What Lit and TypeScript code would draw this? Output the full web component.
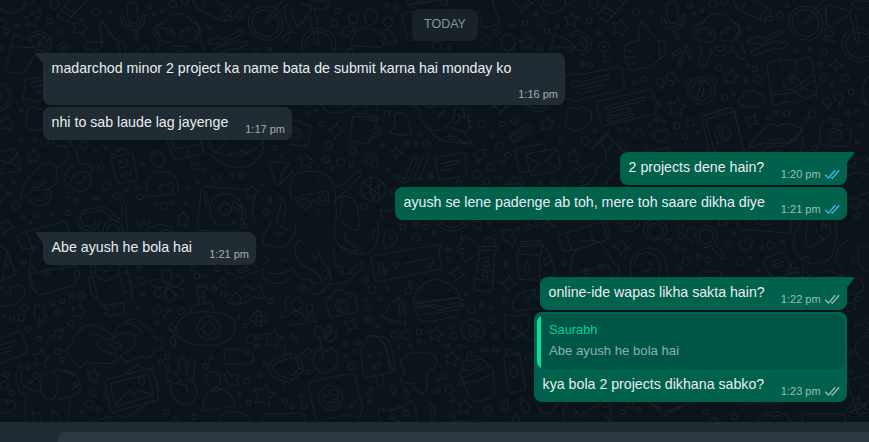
import { LitElement, html, svg, css, nothing } from "lit";
import { customElement, property } from "lit/decorators.js";
import { classMap } from "lit/directives/class-map.js";
import { styleMap } from "lit/directives/style-map.js";

interface Message {
  text: string;
  time: string;
  width: number;
  out?: boolean;
  first?: boolean;
  tall?: boolean;
  read?: boolean;
  quote?: { author: string; text: string };
}

const MESSAGES: Message[] = [
  { text: "madarchod minor 2 project ka name bata de submit karna hai monday ko", time: "1:16 pm", width: 522, first: true, tall: true },
  { text: "nhi to sab laude lag jayenge", time: "1:17 pm", width: 249 },
  { text: "2 projects dene hain?", time: "1:20 pm", width: 227, out: true, first: true, read: true },
  { text: "ayush se lene padenge ab toh, mere toh saare dikha diye", time: "1:21 pm", width: 452, out: true, read: true },
  { text: "Abe ayush he bola hai", time: "1:21 pm", width: 213, first: true },
  { text: "online-ide wapas likha sakta hain?", time: "1:22 pm", width: 307, out: true, first: true },
  { text: "kya bola 2 projects dikhana sabko?", time: "1:23 pm", width: 313, out: true, quote: { author: "Saurabh", text: "Abe ayush he bola hai" } },
];

/* Wallpaper doodles are laid out on sheets, in thirds of a pixel. */
interface Sheet {
  x: number;
  y: number;
  dots: number[][];
  stars?: number[][];
  sparks?: number[][];
  paths: string[];
}

const starPath = ([cx, cy, r, rot = 0]: number[]) => {
  const pts: string[] = [];
  for (let i = 0; i < 10; i++) {
    const a = ((i * 36 - 90 + rot) * Math.PI) / 180;
    const k = i % 2 ? r * 0.5 : r;
    pts.push(`${(cx + k * Math.cos(a)).toFixed(1)} ${(cy + k * Math.sin(a)).toFixed(1)}`);
  }
  return `M${pts.join("L")}Z`;
};

const sparkPath = ([x, y, r, rot = 0]: number[]) => {
  const a = (rot * Math.PI) / 180;
  const p = (i: number, k: number) =>
    `${(x + k * Math.cos(a + (i * Math.PI) / 4)).toFixed(1)} ${(y + k * Math.sin(a + (i * Math.PI) / 4)).toFixed(1)}`;
  return `M${p(0, r)}Q${p(1, r * 0.22)} ${p(2, r)}Q${p(3, r * 0.22)} ${p(4, r)}Q${p(5, r * 0.22)} ${p(6, r)}Q${p(7, r * 0.22)} ${p(0, r)}Z`;
};

const SHEETS: Sheet[] = [
  {
    x: 0, y: 0,
    dots: [[117,34,5],[163,13,14],[150,63,8],[8,70,12],[20,93,8],[52,80,6],[178,97,8],[191,142,15],[191,142,3],[288,35,11],[333,34,4],[450,19,7],[461,42,5],[487,33,5],[519,12,11],[555,4,9],[628,82,5],[719,45,10],[742,16,6],[768,153,6],[809,148,5],[0,145,8],[63,330,5],[62,419,6],[105,419,5],[134,422,11],[250,436,11],[288,453,6],[317,443,5],[428,493,5],[303,503,8],[40,544,6],[320,558,12],[381,571,5],[413,565,6],[421,591,9],[288,593,7],[230,602,6],[203,639,8],[155,642,5],[110,644,7],[71,653,5],[48,619,11],[201,591,3],[566,565,5],[592,544,6],[585,499,10],[613,510,6],[649,534,12],[697,525,5],[722,527,7],[788,555,4],[808,600,7],[799,635,9],[824,445,7],[844,465,5],[470,614,5],[493,618,10],[518,608,5],[556,609,4]],
    stars: [[95,59,24,5],[240,83,27,12],[21,371,23,8],[101,470,22,4],[755,577,23,10],[549,655,20,6]],
    sparks: [[3,580,32,5]],
    paths: [
      "M0 24Q18 44 45 38Q72 34 74 4M75 9Q92 21 103 0",
      "M174 42L217 -10M174 42Q174 52 195 63Q202 66 208 60L263 -4M185 34Q202 39 216 53M196 23Q214 29 227 42",
      "M380 25Q378 9 394 8Q409 6 411 20L416 56Q415 70 401 71Q386 70 384 58ZM362 49Q365 87 402 91Q436 85 435 44L427 46Q429 77 401 81Q374 79 371 48ZM399 91L410 121L417 118L407 90",
      "M253 142Q259 122 286 126L308 125L298 72Q301 61 310 69Q324 82 326 97L352 123L370 123Q377 136 376 157M352 123Q359 140 361 157M253 142Q258 150 274 147M308 125Q309 151 275 153",
      "M470 103Q466 75 491 67Q507 39 535 41Q564 42 575 65Q600 73 598 105Q596 119 580 121M487 72Q460 66 461 104Q468 118 479 123M583 66Q604 70 601 104M476 100Q477 85 498 83L516 90Q528 97 524 112Q520 131 497 127Q480 123 476 100ZM544 96L564 82Q589 82 591 105Q587 124 562 126Q542 122 540 107ZM496 84L504 101M511 88L515 106M566 84L558 101M550 93L549 105M519 136Q526 155 541 154Q557 151 558 137Q540 142 519 136M481 130L469 158M598 124Q611 136 615 158",
      "M409 157L438 137L449 157",
      "M580 4L593 28L671 63L697 61L688 24L613 -16L590 -16ZM604 30L618 5M662 59Q662 38 683 26M673 62L681 46L695 52",
      "M624 127Q626 117 637 119L645 114Q654 103 669 118L720 91Q733 88 731 99L678 124Q672 138 654 129L635 132Q625 133 624 127M639 157Q635 147 648 146L694 127Q707 118 719 129L738 124Q747 126 740 136L723 141Q716 153 700 145L655 161",
      "M745 70Q745 28 787 20Q832 13 848 58Q854 108 812 120Q760 126 745 70ZM756 68Q757 37 786 31Q825 25 836 61Q840 101 807 109Q765 111 756 68M797 74Q791 67 797 62L850 0M797 74L853 20L858 60L870 85M851 20L870 14M870 97Q850 104 848 118L858 124L870 110",
      "M42 103L17 204Q18 216 29 217L64 220Q74 219 79 209L118 142M42 103L90 123M37 140L100 143M84 110Q100 90 126 95Q150 105 154 130Q154 154 132 161M92 115Q108 98 127 105Q144 117 143 132Q141 151 122 153Q99 150 96 127ZM118 130L107 106M118 130L130 107M118 130L141 124M118 130L138 144M118 130L116 151M118 130L100 143",
      "M53 154h4M69 160h4M82 151h4M60 181h4",
      "M0 250Q32 247 36 286Q36 322 0 334M0 258Q27 257 28 286Q27 314 0 324M0 282L8 291L0 296",
      "M140 227L75 240Q69 247 76 263L66 300L90 296L96 305L140 298M99 246L140 240M99 262Q91 252 99 246M99 262L140 253M107 278L140 272",
      "M77 367Q82 354 81 335Q86 318 105 323Q115 328 128 327M77 367Q72 386 106 391Q116 394 133 381",
      "M0 457L47 445L62 505Q61 512 53 513L0 523M0 482L15 484Q22 494 32 486L55 458M15 485L4 516M34 486L60 508",
      "M169 501L161 491Q146 485 120 499L105 515Q72 539 61 589Q62 598 74 592Q85 572 109 570Q145 574 160 558Q179 537 166 501M169 501Q195 496 204 467Q205 451 191 438M200 423Q216 425 229 456L240 492Q260 487 275 502Q282 515 268 521Q241 508 222 527L205 550Q195 564 195 540Q196 503 228 492M88 595Q91 617 123 617Q152 612 155 584Q154 570 145 568M101 591Q107 605 125 603Q140 598 140 583M211 552Q219 575 243 576Q275 568 274 532L269 521M229 548Q239 557 251 545Q257 535 251 529M99 559Q102 549 125 543Q138 541 130 552Q111 564 102 565Q97 563 99 559Z",
      "M157 422Q164 438 181 441L190 435M184 422Q187 437 202 442Q218 439 214 420",
      "M333 480Q333 474 342 471L390 459Q397 458 400 464L411 534Q410 541 400 543L361 551Q351 551 350 543ZM335 465L362 446L378 447L380 458M361 481Q354 491 361 501Q376 509 383 489Q380 474 370 480M362 488L371 485M368 524Q362 522 363 529Q364 534 376 528L395 523Q400 515 392 514L368 520",
      "M452 473Q458 453 476 455Q496 461 494 482Q490 502 473 502Q457 500 452 473ZM439 574Q440 532 462 519Q479 510 507 517Q533 529 536 571Q538 581 521 584L449 588Q437 590 439 574ZM505 584Q474 574 478 559Q487 548 501 558Q512 542 521 552Q525 568 505 584",
      "M500 420L519 471Q521 479 534 478L605 462Q612 459 611 450L600 420M511 420L524 448L608 430M558 460A6 6 0 1 0 570 458A6 6 0 1 0 558 460M627 420Q629 453 648 458Q665 460 677 467L712 468Q754 466 793 421M634 461Q660 501 718 504Q770 500 791 444L792 421M682 463Q697 472 694 457L707 461Q724 463 723 452L739 459L753 448M642 457Q671 437 676 421",
      "M870 489L813 486Q806 488 811 496L827 553Q831 559 839 552L870 523M839 552L846 516L870 490",
      "M593 660L605 567Q606 560 613 559L741 570M759 599L757 654Q758 660 770 660M611 581L618 574L625 606L618 614ZM628 628Q630 589 675 580Q717 584 727 620Q731 648 721 660M628 628Q631 660 652 660M658 627Q662 609 680 610Q697 618 694 634Q684 649 668 643Q658 639 658 627ZM675 628h5M699 606Q704 602 710 611L735 633Q742 644 735 660M697 611L701 621L723 636Q729 645 724 660",
      "M240 660L249 632L304 620L318 622L360 660M246 642L306 631L340 660M338 587Q342 578 350 579Q369 585 378 619L380 660M337 590Q358 595 367 619L366 660M840 589Q862 611 856 637L847 660M836 594Q844 609 840 629Q830 645 831 660",
    ],
  },
  {
    x: 870, y: 0,
    dots: [[145,32,8],[131,69,10],[179,155,9],[290,15,5],[317,23,7],[388,6,6],[446,108,7],[440,138,12],[463,7,9],[480,144,6],[588,120,12],[618,98,9],[666,74,6],[705,69,8],[757,69,12],[771,93,8],[802,80,6],[738,41,6],[751,145,8],[669,148,5],[54,339,6],[80,331,5],[94,373,7],[116,435,10],[188,453,11],[109,479,9],[152,487,12],[185,492,7],[126,505,4],[275,438,6],[292,340,8],[292,510,5],[309,572,8],[351,431,7],[379,432,5],[408,429,9],[390,402,6],[223,619,10],[253,590,5],[422,527,7],[507,550,9],[561,524,13],[601,502,10],[638,483,6],[653,466,8],[629,440,12],[606,405,6],[575,371,11],[637,371,7],[672,363,9],[631,535,6],[660,548,5],[813,418,5],[790,545,7],[589,545,8]],
    stars: [[49,485,24,5],[845,59,24,5],[771,371,23,8],[851,470,22,4]],
    sparks: [[138,393,26,8],[318,457,21,5],[697,7,34,5],[633,320,24,0]],
    paths: [
      "M-3 25L22 81L68 22L31 8M15 102Q-10 84 -5 111M60 17Q50 4 75 3L116 4Q121 20 98 29L75 25M71 27L81 54L86 137L75 130L60 51L22 81M35 140Q35 89 84 84Q132 92 137 127Q140 145 133 158M46 135Q50 100 86 95Q121 101 128 137L124 158M35 140Q34 156 42 158",
      "M185 136Q183 88 228 84Q266 83 281 132Q281 144 266 142ZM175 57Q179 35 195 41Q206 53 200 71Q180 74 175 57M224 43Q232 23 249 29Q266 40 259 65Q246 85 230 70Q222 59 224 43M280 67Q281 48 298 52Q312 61 304 78Q291 92 280 67M150 103Q163 77 183 78Q196 80 200 86Q179 92 178 112ZM275 96Q284 86 298 90Q315 97 319 128L290 132Q288 109 275 96",
      "M337 49Q335 41 344 39L366 34M351 117L337 49M353 116Q348 123 363 121L378 118M365 37L379 116",
      "M349 0L356 15L380 27M358 13L472 -4M375 13L466 -3L477 25",
      "M567 27L577 78Q580 84 590 83L623 72Q628 70 627 61L606 0M571 82L563 53",
      "M634 124Q639 104 656 102Q675 110 676 131Q670 154 651 153Q635 145 634 124M686 121L708 122L707 108Q714 97 720 105L717 121L732 114Q739 118 728 127L718 132L724 143Q716 149 710 137L695 147Q689 143 701 130Z",
      "M751 12Q754 38 789 40Q826 33 827 0M760 0Q757 17 780 15M828 12Q842 21 853 0",
      "M792 103L780 157M792 103L840 123M787 140L850 143M834 110Q850 90 870 94M842 115Q855 101 870 103M846 127Q849 146 870 152M850 143L868 130M840 157L850 143",
      "M96 315Q106 343 145 338Q183 333 200 314M229 319L237 330M262 333L259 318",
      "M829 227L870 219M829 227Q819 240 826 263L816 300L840 296L846 305L870 300M849 246L870 242M849 262Q841 252 849 246M849 262L870 257M857 278L870 275",
      "M827 367Q832 354 831 335Q836 318 855 323L870 328M827 367Q822 386 856 391L870 391",
      "M703 316Q712 334 742 335Q772 332 777 316M714 316Q721 325 740 325Q760 325 767 316",
      "M-7 363L0 370L6 358L35 364L34 372L58 374Q66 379 63 387L54 431Q53 440 42 439L-4 431M-8 401Q-3 381 15 382Q36 388 35 408Q31 424 15 423Q-2 420 -8 401M4 402Q6 391 19 393Q28 398 26 408Q20 415 12 412Q4 410 4 402",
      "M188 348L181 414Q180 424 190 423L227 431Q237 431 241 420L247 413M188 348Q192 337 222 341Q261 346 264 353Q259 364 246 362L188 348M193 351Q225 343 258 358M261 359L255 381Q270 376 274 392Q271 415 247 412L234 420M248 390Q255 378 265 395Q260 405 250 401Z",
      "M300 398L316 374Q307 341 328 337Q358 345 357 366L361 382L364 407L308 401ZM324 339Q323 331 331 337M315 400Q329 414 344 402",
      "M370 315L387 327Q390 346 396 363Q416 398 447 390Q477 387 488 356L500 320M443 350L461 332Q467 330 462 339L449 353Q442 357 443 350M492 369L512 357L504 345L524 354L518 320M526 330L522 351L537 346L531 367L542 362L535 380L547 380L526 397L482 382M470 411Q492 403 513 422L548 435L521 399M470 411L536 432L496 428L456 421Q432 410 420 391M404 315Q427 334 436 317",
      "M316 528Q319 522 325 526L343 539L370 472Q378 465 383 474L354 546L340 550L317 533ZM370 540L398 468Q410 453 418 464L390 534L378 541L370 535M390 534L397 539",
      "M435 478Q435 471 443 471L530 457Q526 471 526 480L530 519Q531 525 524 527L453 540Q446 540 445 532ZM454 491L511 479M457 501L503 490M454 512L484 506",
      "M564 450L587 448L581 463L587 467L559 489L565 472L550 470Z",
      "M660 413L700 379Q714 370 721 379Q724 388 714 397L680 424Q668 427 671 416L702 388Q711 383 710 392L684 414M660 413Q664 398 680 389M661 413Q660 424 674 426",
      "M676 456Q673 448 681 446L758 431Q764 431 766 440L769 449M676 456L689 512Q690 520 704 516L717 512M708 463L793 445Q802 445 804 455L811 501Q809 511 801 513L732 527Q722 527 719 515L708 468ZM710 468L747 492Q757 497 764 486L800 448M722 520L744 492M806 506L769 484",
      "M226 484Q228 460 246 459Q264 467 262 492L260 506L237 493Q227 491 226 484ZM237 479A8 8 0 1 0 253 477A8 8 0 1 0 237 479",
      "M1 541Q9 522 39 516Q82 507 110 526Q130 542 133 563L154 554Q178 545 197 516Q214 508 214 522Q189 560 154 583L135 605M1 541Q-3 570 8 600M16 598L36 587L113 573L117 606Q111 617 94 615Q81 611 74 599L66 600Q67 617 50 625Q31 628 22 608L20 602ZM32 598L56 595L56 609Q49 617 37 614ZM85 588L106 584L106 600Q95 608 87 597ZM82 550h3M99 548h3M86 534h4M78 645L88 635M112 632h5M135 574L139 651M154 583L157 608L150 645M139 593Q168 582 190 596Q204 612 206 650M0 507L8 515L0 524",
      "M213 572Q211 539 246 531Q285 537 287 569Q282 600 253 605Q217 601 213 572ZM217 589L281 549M221 549L279 591M246 531Q230 562 253 605M262 535Q268 563 266 601",
      "M645 554Q658 551 656 537Q672 528 680 535L695 536L704 550M662 559Q680 538 701 560M742 557L748 545L756 557M820 560Q835 520 870 500",
      "M270 630Q295 640 315 625M278 658L270 630",
    ],
  },
  {
    x: 1740, y: 0,
    dots: [[42,13,14],[399,12,12],[434,4,10],[599,45,11],[622,16,6],[57,97,7],[28,62,8],[168,35,11],[213,34,4],[329,19,7],[341,42,5],[366,33,5],[508,82,5],[72,140,15],[72,140,3],[3,193,9],[31,195,8],[163,249,6],[192,237,8],[232,357,7],[253,364,3],[290,377,9],[332,369,10],[210,376,5],[316,410,8],[353,398,5],[417,205,9],[434,294,9],[460,281,5],[497,241,6],[536,239,12],[502,196,5],[524,207,8],[565,354,6],[584,338,7],[620,341,9],[648,153,6],[688,147,5],[733,157,9],[722,193,6],[730,234,11],[756,252,7],[795,234,11],[814,277,9],[804,340,6],[845,374,7],[830,426,5],[830,333,5],[705,444,8],[859,478,7],[177,401,13],[131,435,12],[118,389,6],[143,387,4],[15,422,12],[44,392,5],[197,443,5]],
    stars: [[120,83,27,12],[452,231,24,7],[290,322,30,8],[812,485,24,5]],
    sparks: [[769,195,20,5],[515,362,24,25]],
    paths: [
      "M54 42L97 -10M54 42Q54 52 75 63Q82 66 88 60L143 -4M65 34Q82 39 96 53M76 23Q94 29 107 42",
      "M260 25Q258 9 274 8Q289 6 291 20L296 56Q295 70 281 71Q266 70 264 58ZM242 49Q245 87 282 91Q316 85 315 44L307 46Q309 77 281 81Q254 79 251 48ZM279 91L290 121L297 118L287 90",
      "M350 103Q346 75 371 67Q387 39 415 41Q444 42 455 65Q480 73 478 105Q476 119 460 121M367 72Q340 66 341 104Q348 118 359 123M463 66Q484 70 481 104M356 100Q357 85 378 83L396 90Q408 97 404 112Q400 131 377 127Q360 123 356 100ZM424 96L444 82Q469 82 471 105Q467 124 442 126Q422 122 420 107ZM376 84L384 101M391 88L395 106M446 84L438 101M430 93L429 105",
      "M460 4L473 28L551 63L577 61L568 24L493 -16L470 -16ZM484 30L498 5M542 59Q542 38 563 26M553 62L561 46L575 52",
      "M0 96Q34 104 34 130Q32 158 0 168M0 105Q24 115 23 132Q20 150 0 153M0 130L10 107M0 130L21 124M0 130L18 144M-4 130L-4 151",
      "M625 70Q625 28 667 20Q712 13 728 58Q734 108 692 120Q640 126 625 70ZM636 68Q637 37 666 31Q705 25 716 61Q720 101 687 109Q645 111 636 68",
      "M677 74Q671 67 677 62L730 0M677 74L733 20M820 17Q815 4 830 3L868 4M820 17L830 28L855 25",
      "M187 71Q183 60 176 73L178 121L156 127Q129 134 134 148Q141 158 160 153M134 150Q128 167 139 173L164 171M136 174Q134 190 145 194L170 189M143 195Q141 213 158 212L183 205Q210 207 234 181L256 166Q261 144 251 123L236 122L210 97Q207 84 187 66M236 123L240 178",
      "M278 160L322 136L337 170L329 175L316 146L303 200Q297 206 295 197L308 153L284 169Z",
      "M70 155L76 181M66 188L93 181",
      "M359 137L367 153Q352 177 361 197Q373 205 384 187L394 143M394 158Q413 176 440 163L457 149M456 137L461 142Q462 163 484 178Q501 173 494 154L480 129M404 139Q421 145 438 134Q439 151 421 155Q407 155 404 139",
      "M503 127Q506 116 516 118Q531 101 548 117L600 90Q612 88 611 99L556 124Q548 139 533 129L514 132Q503 134 503 127M515 161Q511 151 524 149L573 127Q589 118 603 128L618 124Q629 129 617 138Q602 153 587 143L529 166Q518 169 515 161",
      "M740 14L738 88M733 20L738 60L748 85L815 36M745 14L815 36Q812 17 821 5M733 90Q744 84 761 98Q757 115 738 106ZM738 106L729 118L738 122L746 111M752 119Q760 129 765 122M785 137Q785 88 833 84Q855 86 869 100M797 137Q800 100 834 96Q854 97 869 112M785 137Q794 177 830 186Q850 188 868 181M797 137Q803 168 833 175L868 168M812 50L829 130Q836 137 839 127L825 42",
      "M560 193Q559 186 570 187L600 177L646 183L686 170Q692 169 695 177L711 278Q708 286 699 285L650 309L621 304L590 315Q580 317 578 307ZM577 276L635 267L692 230L700 225M577 286L642 277L704 242M635 267L665 291M665 259L706 279M637 251Q623 236 627 226Q635 218 645 224Q654 236 637 251M632 233A5 5 0 1 0 643 232A5 5 0 1 0 632 233",
      "M600 180L603 195M605 208L608 225M610 242L613 258M617 284L619 300M646 184L648 196M650 205L653 218M657 235L663 260",
      "M228 242Q238 227 250 239Q258 254 241 269Q249 252 237 254Q227 252 228 242M258 228Q267 211 282 220Q298 232 281 254L275 257Q283 238 269 242Q260 241 258 228M728 303Q736 289 748 296Q760 309 742 327L738 328Q745 312 734 314Q727 311 728 303M762 293Q769 277 782 282Q797 294 777 318Q781 300 770 303Q763 299 762 293",
      "M323 270Q325 236 365 231Q401 237 406 270Q402 309 365 314Q331 307 323 270ZM333 270Q338 245 365 242Q391 247 395 270Q391 299 364 304Q337 297 333 270M360 248L360 266L350 284Q354 296 368 286L371 267L366 248M315 253Q309 241 330 237M389 232Q412 234 410 251",
      "M0 224L119 201Q125 202 126 209L134 263Q132 271 124 272L0 297M0 246L78 226Q90 226 85 236L0 257M0 269L63 253Q75 254 69 263L0 282",
      "M50 316Q46 307 57 304L205 269Q214 268 217 278L221 294L243 316L227 324L228 335Q226 341 219 343L77 376Q67 379 64 369ZM81 318L190 291Q202 292 196 301L81 329Q71 328 81 318M88 337L147 323Q157 325 149 334L88 349Q78 344 88 337M83 357L155 340Q167 340 160 348L89 367Q79 364 83 357M0 320Q41 324 34 358Q25 380 0 387",
      "M475 308Q473 291 489 290Q490 273 510 272Q528 269 534 281Q549 277 553 293Q554 309 535 319Q514 329 504 319Q485 323 475 308Z",
      "M367 362Q364 350 374 346L446 323Q456 321 460 332L493 451M367 362L388 457M377 363L389 403L405 457M377 358L465 334L482 410M405 343L422 338M405 406Q404 382 427 377Q451 382 453 403Q448 425 423 427L410 431L413 418Q406 413 405 406ZM418 391L424 388L429 398L424 402Q430 413 437 411L444 413L440 419Q420 420 417 400Z",
      "M685 338L702 326L704 343M685 338L689 362Q683 370 674 364Q670 356 685 354M704 343L706 350Q699 358 692 352",
      "M507 443L512 430L560 378Q580 366 592 379Q607 367 631 373L665 385Q672 394 659 401L620 430M507 443L538 434L555 428Q574 435 590 429L622 430Q635 433 666 391M567 414L572 425L583 416M586 418L608 415L612 425M545 456Q575 430 600 440Q621 434 668 410Q675 435 661 457M585 456Q596 448 604 456",
      "M727 367L728 376L722 380L718 423Q717 433 731 435L796 440Q806 439 808 429L814 390Q815 379 805 378L782 372L778 359L749 356L742 366ZM745 405Q747 383 765 385Q786 389 785 407Q780 425 763 424Q747 421 745 405M753 406Q755 394 767 395Q777 400 774 410Q767 418 759 414M758 369L780 371Q784 377 776 378L759 375ZM797 388h6",
      "M220 407Q227 388 241 397Q259 378 265 394Q267 412 246 426Q222 419 220 407ZM36 444L83 394L86 401L40 445ZM63 418Q67 404 80 405Q98 411 95 436Q88 451 74 447Q64 438 63 418M95 420Q113 432 128 456M74 448Q87 480 70 490Q50 500 49 510M190 457L262 443L270 457",
      "M0 520Q20 490 45 492Q54 510 36 540Q20 558 0 558M75 557Q90 520 118 505M0 530Q20 525 20 534L0 545",
      "M869 230Q843 245 849 292Q855 309 869 322M838 290Q843 314 869 318",
      "M800 530Q825 508 869 525M800 598L869 577M802 605Q807 628 830 625Q847 618 846 600L854 599Q859 613 869 616M815 598L836 594L836 609Q825 620 817 612ZM845 534h4M832 548h4M824 652Q828 636 840 636Q842 650 828 655Z",
    ],
  },
  {
    x: 0, y: 660,
    dots: [[90,7,5],[72,128,7],[74,265,10],[11,287,5],[36,293,8],[64,293,9],[160,252,6],[187,244,7],[173,276,8],[212,226,6],[243,227,10],[213,310,8],[117,356,7],[83,328,7],[174,395,9],[188,419,6],[85,441,6],[110,466,9],[18,464,8],[13,496,12],[35,519,8],[92,484,6],[279,519,10],[268,553,12],[248,576,6],[295,568,7],[279,483,5],[418,146,7],[426,183,11],[429,221,6],[412,264,5],[473,270,12],[505,269,7],[543,273,10],[495,291,5],[470,308,6],[503,411,8],[482,427,7],[502,440,6],[632,411,6],[617,438,8],[578,147,7],[591,169,9],[618,168,2],[643,206,7],[671,222,8],[670,186,10],[653,148,7],[716,291,5],[735,317,7],[752,358,13],[775,352,7],[770,380,7],[741,484,9],[718,522,6],[746,548,7],[778,465,6],[811,243,8],[856,545,7],[497,575,8],[583,592,8]],
    stars: [[236,275,24,12],[124,416,29,8],[280,466,22,8],[820,356,31,10],[792,526,36,12],[549,3,20,10]],
    sparks: [[18,18,28,10]],
    paths: [
      "M0 75L22 93L47 162L0 185M22 93L7 180M14 124L31 115L31 130L14 139ZM0 260Q50 260 71 230Q83 200 54 195L27 206Q42 226 27 225Q0 205 0 200",
      "M59 41L188 5Q197 3 201 13L212 53M59 41Q50 49 55 60L68 90L111 80M81 36L96 85M92 106L104 82M92 106L88 160L109 220Q116 226 127 223L217 197Q230 192 227 182L222 136M96 135L110 158L222 137M133 149L146 145L147 161L136 165ZM178 137L190 134L191 150L181 153ZM228 135L239 165Q239 178 225 181M98 160L86 165L96 205L109 210",
      "M232 0Q233 31 266 32Q299 28 299 0M245 0Q249 22 268 22Q288 17 288 0M310 36Q307 6 338 0Q366 2 370 36M322 36Q322 13 341 12Q357 17 359 36M380 0L382 36M412 0Q412 19 418 22Q428 21 425 11M426 0Q434 19 449 11L446 0M442 36Q436 19 460 20Q481 5 503 20Q523 15 520 36M483 36Q485 28 499 28Q512 31 515 36",
      "M283 135Q283 178 318 182Q356 177 361 135M270 135L293 236Q296 256 310 256L383 246Q400 240 395 222L380 136M307 150Q319 161 328 148M264 178Q268 168 277 175M265 180L277 225L290 235M357 164L373 218L397 216L400 202L379 156ZM312 256L314 267L325 266L315 282Q318 289 343 287L340 255M340 262L369 248L374 280L344 287",
      "M497 191Q472 151 499 149Q524 154 510 188Q528 153 550 175Q554 194 515 200Q558 203 552 224Q536 239 514 209Q538 238 515 242Q488 245 500 207Q479 241 463 224Q455 206 492 203Q442 200 455 183Q470 171 497 191ZM497 197A9 9 0 1 0 516 197A9 9 0 1 0 497 197M506 190V205M499 199H513",
      "M526 327Q537 279 606 275L650 277Q705 280 706 323Q704 371 631 376Q539 378 526 327ZM591 325Q594 293 627 287Q657 295 663 325Q657 356 626 361Q595 355 591 325M609 325Q611 310 627 306Q643 311 645 325Q641 341 626 344Q611 340 609 325M574 280L573 260L633 246L642 270M590 205Q587 194 603 194L620 194L623 209L614 210L612 249M590 205L597 253M596 205L614 200M596 219L613 215M596 235L613 230M526 327L521 318Q506 305 506 319Q507 333 518 333L522 349L527 341M521 349Q534 374 522 383Q507 376 513 349ZM528 328L514 334",
      "M601 325h3M608 306h3M627 297h3M645 306h3M652 325h3M645 343h3M627 352h3M608 343h3",
      "M677 136L679 158L704 165L709 181L717 170L727 172L755 158L776 155L772 140L757 134M710 155L740 139L747 149L717 161M685 248Q691 225 725 207L739 195L756 208Q780 203 786 194L785 215L795 236L761 231Q730 263 685 248ZM713 221Q732 240 715 256M690 239h4M735 235Q742 222 753 229",
      "M754 289L763 285L765 274L782 274L786 286L800 290L799 302L787 305L782 318L768 315L764 305L751 300ZM768 296A9 9 0 1 0 786 296A9 9 0 1 0 768 296",
      "M108 254L136 259L128 282L142 285L115 319L119 293L100 288ZM163 354L166 330L191 325L185 351M163 335L190 331M164 348Q147 345 148 355Q156 362 164 354M185 345Q172 345 176 356Q185 358 186 348",
      "M201 384L214 374Q224 327 270 313Q300 315 337 346L339 358L305 357Q289 363 294 377Q300 392 345 403Q360 424 336 431L256 429L245 440Q233 449 217 420Q198 402 201 384M270 347Q288 336 308 353M346 335L344 354Q376 330 396 342Q413 364 399 381Q384 397 364 403Q360 416 377 425Q402 420 429 408Q442 428 466 391L479 387Q493 380 490 370Q485 354 472 360Q444 311 403 297Q363 303 346 335M371 314Q399 300 428 340M348 392Q327 371 338 367L349 371Q361 362 366 373Q364 384 348 392",
      "M0 356L53 334Q62 332 66 342L83 390Q84 399 75 401L0 432M0 376L48 360M0 390L51 373M3 402L33 391",
      "M67 441Q61 431 55 443Q45 466 49 478L59 514Q81 525 79 534L74 575L78 604M67 441L62 478Q66 512 126 514M120 486Q123 455 158 457L173 469Q175 504 166 531L145 542Q119 529 120 486ZM155 457Q175 443 198 453Q230 458 236 481L242 503Q238 520 222 525L172 541M181 455Q209 453 224 469M200 489h3M216 492L229 488L231 500ZM231 500L217 507M211 532Q212 554 206 571L204 606M102 604L98 575L120 580L125 604M154 604L158 573Q172 572 180 604",
      "M315 488Q314 481 324 478L448 445Q456 445 459 454L476 531Q476 539 469 541L342 576Q333 576 331 568ZM331 490L445 462L462 526L347 560ZM347 556L381 514Q389 511 397 519L413 540M399 521L419 511L456 526M415 483A11 11 0 1 0 437 483A11 11 0 1 0 415 483M380 460L411 434L430 447M467 474L479 508L471 512M321 502L312 527L325 537M344 578L373 596L440 553",
      "M500 472Q499 451 517 454L526 462L537 459L538 418Q541 409 550 412Q560 418 558 460L562 463L568 421Q575 413 586 421L580 484Q595 510 589 527Q580 556 546 553Q511 537 510 491L500 472M525 462L542 481Q532 496 518 487L502 484M531 490L560 497L564 519M558 479Q577 474 577 488",
      "M617 471Q627 450 645 455Q663 463 662 484Q654 505 638 503Q618 493 617 471ZM609 565Q610 515 650 505Q679 501 707 549Q701 561 681 561L618 571Q610 575 609 565ZM633 511L650 516L664 505M673 463Q678 449 687 456L691 470L713 463Q723 470 706 481L719 492Q711 503 696 490L688 501Q677 500 683 484Q666 478 681 475ZM676 386Q677 383 684 385L731 390Q738 392 737 400L758 401L761 410L756 430L741 432L733 429L731 435L681 431Q670 430 671 420ZM688 402h4",
      "M0 540Q24 535 22 548Q42 534 46 552Q47 571 17 582L0 573M655 604Q673 571 710 574Q744 582 752 604M787 604Q784 582 799 582L870 580M283 604L326 590L331 604M519 604L525 590L537 604",
      "M592 0Q592 32 608 32L725 33M640 0Q644 16 670 17Q699 15 710 0M732 0V12M725 18A8 8 0 1 0 741 18A8 8 0 1 0 725 18M797 80Q776 64 805 20L815 0M831 0Q833 20 865 31M870 65Q850 86 825 80Q799 77 797 65M828 36L836 47L850 38M790 110Q798 106 808 120L797 128M846 123Q852 108 862 124M793 143Q776 171 798 180Q825 197 849 187L870 180M803 155Q829 169 870 150",
      "M870 230Q853 229 855 250L858 265M842 292Q845 270 870 270M870 287L839 292M802 440Q810 420 870 400M788 424L807 434M802 440Q812 480 870 488M788 424Q786 433 803 440M816 440Q824 425 870 415M816 440Q824 468 870 475M857 382L851 405M850 486L857 505",
    ],
  },
  {
    x: 870, y: 660,
    dots: [[338,20,8],[378,14,7],[409,21,7],[378,50,12],[433,42,7],[302,52,6],[476,89,6],[476,118,6],[246,209,12],[228,180,8],[293,203,5],[361,190,7],[355,213,10],[229,238,6],[270,236,6],[234,265,8],[236,298,9],[262,317,4],[39,204,8],[164,371,6],[206,368,7],[194,393,5],[169,406,5],[184,440,9],[32,526,7],[42,558,9],[7,561,6],[313,345,10],[347,346,13],[387,337,8],[326,381,4],[362,379,6],[387,363,4],[484,320,7],[491,348,11],[471,378,7],[467,470,8],[445,481,5],[478,509,12],[443,511,7],[487,538,7],[490,588,6],[594,571,12],[617,390,8],[616,348,7],[607,301,9],[643,240,7],[545,270,12],[573,254,6],[604,262,7],[529,222,7],[514,255,6],[562,15,11],[598,9,5],[683,26,6],[649,133,7],[18,359,7],[4,349,5],[822,128,6],[713,412,8],[727,458,6],[239,545,6]],
    stars: [[437,343,24,8],[485,417,23,12],[523,562,23,8]],
    sparks: [[501,162,26,8],[656,190,26,5],[183,315,24,25],[773,18,22,5]],
    paths: [
      "M18 0Q20 50 -5 65M37 57Q-6 78 37 139Q85 151 98 188Q113 210 90 220Q67 225 55 210L76 192L60 178Q30 186 3 141M82 78Q85 120 119 150Q128 179 115 195L90 220M66 111Q68 96 80 118Q77 128 67 116M98 153Q113 149 118 164L105 177M80 188L98 188",
      "M133 30Q132 75 175 96Q215 112 243 97Q273 65 263 0M133 30Q133 2 142 0M158 0Q168 31 203 31L210 5M166 38Q158 53 175 67L196 78M155 80Q180 96 203 90L195 78M131 90Q132 128 147 152Q164 169 185 158L209 128Q222 124 219 140L180 178Q149 199 118 190M142 140Q155 132 160 156M180 162Q176 146 190 144M193 101Q196 87 207 92L219 103M262 26Q244 34 250 52",
      "M281 61Q279 34 302 30Q326 39 321 62Q306 83 286 88Q279 80 281 61Z",
      "M243 116Q241 109 249 108L455 72L446 92L454 137Q455 146 446 149L265 185Q258 187 255 178ZM267 132Q275 123 280 134L284 150Q276 159 271 146ZM264 151Q271 166 283 162Q292 158 292 145M283 162L286 170M309 124L331 132L316 148ZM344 131L431 112M407 136L413 144L428 125M422 144L435 124",
      "M431 0Q452 33 491 33Q526 28 538 0M446 0Q467 25 492 22Q515 19 526 0",
      "M578 78Q580 52 598 52Q616 54 616 79M565 80Q563 89 570 92L621 90Q629 83 620 79ZM570 94L550 201Q551 211 564 211L593 215Q605 214 607 205L615 92M567 121Q572 110 596 112M563 147L613 154M559 178L607 181M580 139Q583 119 597 126L598 139ZM576 170Q578 150 592 160L592 172ZM565 70L516 45Q508 48 522 62L510 57Q505 68 514 72Q495 74 502 84L523 86Q501 89 503 98L524 99Q509 107 518 113L524 119L527 125L565 100",
      "M634 33L662 27L671 44L662 49L677 54L668 82L655 61L646 64ZM704 22L719 3L715 -4M704 22Q710 32 718 27L743 15L728 -7M712 17L728 14",
      "M679 101L692 80L694 65L749 62L759 77L777 97L796 153Q798 165 787 168L749 181L687 178ZM679 101L749 107L749 181M692 80L759 77M749 107L760 78M695 64L698 73L751 71M760 121L781 109L782 125L764 137ZM712 123Q696 147 707 157Q717 161 721 147Z",
      "M806 58Q802 47 812 44L870 28M806 58L820 94L870 88M829 39L844 89M841 165L845 115L854 98L870 81M848 156L855 168",
      "M371 236Q379 196 433 178Q491 183 509 226Q506 236 491 234L390 246Q373 248 371 236ZM404 210h5M423 197h5M452 204h5M462 188h5M431 216h4M475 211h5M371 243Q384 254 397 249L505 234Q520 237 516 243Q500 252 492 247L462 264L435 253L379 261Q370 258 371 243M377 271Q375 264 386 263L424 258L449 271L506 257Q517 261 508 268L433 281L380 282Q372 276 377 271M382 286Q384 299 397 301L420 305L491 291Q509 285 506 276",
      "M668 254Q671 227 703 215Q738 204 751 208L762 205M668 254Q665 271 683 272L750 264M703 217Q702 241 714 240Q723 224 738 207Q731 233 745 235L751 215",
      "M107 239Q106 232 117 231L126 229L133 214L148 208L168 216L171 222L188 219Q195 219 197 230L203 266Q203 275 195 277L127 291Q118 291 117 284ZM136 257Q138 238 157 236Q177 241 177 256Q173 275 156 277Q138 273 136 257M145 257Q148 245 158 246Q169 251 167 260Q161 268 151 266Q145 264 145 257M113 237h9M177 231h8",
      "M6 254Q8 234 22 234Q36 242 37 256Q33 271 21 272Q7 268 6 254M0 279Q20 269 34 280Q47 292 46 310Q36 316 0 313M47 267Q50 248 61 252Q71 257 68 271Q61 283 47 267M50 283Q67 276 80 304L57 306Z",
      "M272 290L293 272Q298 245 316 240Q342 236 347 250L347 313L298 298ZM319 240Q320 226 331 226L328 239M327 247Q347 258 341 278L332 286Q323 283 328 270ZM298 298L300 306L313 308",
      "M93 358Q69 343 73 319Q92 314 104 338L105 357Q98 325 120 313Q126 346 105 359M105 355Q109 332 136 336Q145 345 132 359Q117 369 104 361M90 352L92 381L100 413M70 429Q68 391 95 384Q105 386 111 396L120 382Q141 389 143 416Q142 450 107 460Q77 457 70 429",
      "M0 400Q33 403 39 436Q40 467 0 483M0 412Q25 417 25 439Q25 461 0 466M4 397L3 413M22 408L16 420M36 420L25 426M38 445L25 445M29 464L18 455M28 406L52 386Q66 385 64 393Q50 411 40 414M38 450Q62 452 61 460L41 463",
      "M211 399L222 470Q226 475 237 470L302 458Q314 454 314 442Q305 363 287 355Q267 344 230 348L231 364L222 370L225 378L213 385ZM230 348Q269 344 289 380L301 458M257 347Q288 362 306 450M231 402L245 406L236 414M272 396L263 407L274 411M245 432Q257 440 273 428M249 434L253 448Q262 453 269 444L269 433M257 470L264 494Q270 503 280 494L277 465",
      "M333 417L349 412L348 402Q387 394 421 401Q444 411 443 432L426 451L410 460L412 494Q409 519 396 521Q375 515 369 491L332 486Q328 477 340 463Q349 446 331 435Z",
      "M514 332Q514 305 543 298Q578 300 583 331Q581 360 550 366Q518 360 514 332ZM536 313L568 332L554 337L565 348L559 354L549 343L543 352Z",
      "M644 284L675 288L710 284Q721 286 718 294L716 323L703 337L677 358Q655 357 646 339ZM662 314L691 338L714 355M671 315L675 322M661 326L676 325M695 312L690 327M683 348L699 343M712 366L734 358",
      "M504 382Q502 371 516 374L526 381Q518 391 504 382M568 394Q579 381 592 388Q589 398 568 394",
      "M537 395Q546 394 545 406Q572 410 573 417Q593 427 594 438Q612 445 613 459Q598 470 581 471Q563 489 525 486L504 499Q503 482 520 477L509 463Q506 450 522 450L517 437Q517 424 528 422ZM526 423L573 417M522 450Q560 456 573 431M511 474L542 465L594 438M520 486L537 532L562 545Q593 540 614 526L611 465",
      "M651 392Q652 383 661 386L670 396L689 401L706 504Q705 511 697 513L666 518Q657 517 654 507L641 418L651 397ZM648 407L689 403M670 436Q658 452 660 464Q670 478 683 462Q684 451 670 436",
      "M55 500Q52 490 62 485L184 461Q194 460 196 468L216 558Q221 568 212 577L207 597L178 582L88 603Q79 603 77 593ZM86 536Q86 503 124 495Q156 504 160 533Q156 566 123 573Q90 565 86 536ZM96 522L110 529L99 535M119 523A13 13 0 1 0 144 523A13 13 0 1 0 119 523M130 524h4M104 546Q126 551 147 541Q146 561 127 562Q107 561 104 546M119 549L122 561M133 547L133 558M172 560L179 566L186 546M184 562L198 543",
      "M229 519L243 499Q249 508 240 521Q231 528 229 519M302 507L306 496Q324 507 320 520Q310 527 302 507M343 518L342 505Q359 515 358 526Q348 533 343 518M270 604L264 574Q264 562 272 564L296 574L341 560L362 543Q370 541 372 550L382 590L380 604M299 589A8 8 0 1 0 316 589A8 8 0 1 0 299 589M339 579A8 8 0 1 0 356 579A8 8 0 1 0 339 579M304 572L305 564M318 570L317 563M331 566L326 556M415 559Q417 548 424 551Q434 556 438 582L429 604M416 560L426 578L422 604M318 604L324 600L330 602",
      "M633 564L651 535Q661 558 649 571Q636 576 633 564M693 535Q718 549 718 572Q703 588 695 564ZM665 604L677 582L689 604M748 564L754 580L778 580L807 550M823 604Q813 575 831 548M850 570L863 574L850 592M487 604L575 600M0 580L40 582Q48 588 47 604",
    ],
  },
  {
    x: 1740, y: 660,
    dots: [[733,18,8],[460,40,6],[265,64,8],[288,85,6],[312,90,6],[319,123,12],[298,146,7],[383,120,8],[355,110,7],[444,69,8],[573,75,11],[546,82,5],[608,67,6],[481,123,12],[510,115,6],[533,148,7],[832,237,7],[812,455,6],[128,576,7],[151,554,10],[176,568,6],[378,575,8],[463,590,9]],
    stars: [[429,3,20,10]],
    sparks: [[124,82,26,5]],
    paths: [
      "M0 25L65 6Q75 4 79 12L91 50Q90 57 82 58L0 86M66 7L82 57M27 20L42 70M0 66Q55 50 80 90L104 135Q118 130 119 150L112 171M86 136L97 171M0 156L84 138M14 146L24 143L26 160L16 162ZM57 137L69 133L72 150L61 152Z",
      "M111 0Q119 34 147 34Q178 29 180 0M124 0Q131 23 148 22Q166 18 167 0M190 30Q190 1 222 0Q256 3 263 31Q253 60 221 61Q193 53 190 30ZM202 31Q204 13 224 10Q247 17 250 32Q242 50 223 51Q205 46 202 31M346 48Q350 19 379 15Q408 21 412 48Q407 78 378 83Q350 76 346 48M357 48Q360 31 379 26Q399 32 402 49Q397 67 380 72Q360 66 357 48M396 84L424 118Q433 118 434 108L408 75M292 18Q301 5 311 17Q310 33 296 29ZM294 45Q302 32 314 45Q311 59 298 56ZM321 58Q333 57 338 67M324 50Q315 40 325 24Q337 22 346 31",
      "M477 70Q483 53 495 62Q510 46 518 62Q520 79 495 91Q479 84 477 70M472 0Q470 22 483 27L622 39Q632 38 634 28L633 0M520 0Q532 14 550 15Q580 15 592 0",
      "M152 171L151 136Q157 93 196 84Q239 81 256 118L267 171M161 139Q165 101 199 97Q238 100 242 138L235 171M177 136L183 132L189 138M204 133L211 129L216 135M185 151Q200 160 210 145",
      "M362 171Q358 150 377 151L396 158Q420 146 425 160L424 171",
      "M551 127Q547 119 557 115L607 96Q615 95 619 103L636 150Q635 159 625 162L600 171M551 127L569 166L586 171M573 126L607 114M574 136L611 124M582 146L608 136M621 151L635 131L633 146L655 143L644 156L655 157L636 161Z",
      "M668 0L645 38Q635 70 640 86Q661 128 700 132L745 122Q772 88 770 30L766 0M685 0L677 58Q679 84 697 80L750 44Q754 20 750 0M640 55Q649 63 646 72M663 120Q672 98 684 113L687 128M709 28Q710 46 727 59M727 0Q728 22 751 20M724 47L737 60M734 121Q740 113 748 119M670 132L665 171M692 171L676 153M725 158Q745 145 768 160L790 168L750 171M812 58Q764 77 768 120L787 153M868 81Q832 65 833 105Q832 146 869 156M821 103Q813 126 826 120M816 181Q828 165 842 178Q860 206 840 218L810 225M806 250Q832 249 827 267L804 275M829 325Q821 318 832 312Q850 311 869 332M869 313Q848 298 869 292M869 336Q819 360 826 392Q842 424 869 431M869 347Q845 356 838 376M802 385Q819 384 816 398L804 410M805 441h5M804 568Q816 542 832 530L840 545L820 560L864 549L852 560L806 577M807 480L869 462M807 480Q803 486 806 498L831 580Q836 587 844 583L869 577M869 497Q843 500 836 530Q840 560 869 571",
      "M0 604Q-10 580 20 578Q38 558 66 552Q60 570 93 554Q96 585 87 604M64 580L95 604M200 545L260 575L340 546M212 545L250 590L320 552M487 545L493 551L618 545M389 604L405 590L414 604M535 604Q550 577 592 574Q622 582 632 604M667 604Q663 582 678 582L788 580Q798 588 796 604M563 590Q574 578 584 592Q592 580 605 592",
    ],
  },
];

const doodles = SHEETS.map(
  (s) => svg`<svg x=${s.x} y=${s.y} width="870" height="666" overflow="hidden">
    ${s.dots.map(([x, y, r]) => svg`<circle cx=${x} cy=${y} r=${r}></circle>`)}
    ${(s.stars ?? []).map((a) => svg`<path d=${starPath(a)}></path>`)}
    ${(s.sparks ?? []).map((a) => svg`<path d=${sparkPath(a)}></path>`)}
    ${s.paths.map((d) => svg`<path d=${d}></path>`)}
  </svg>`
);

@customElement("chat-wallpaper")
export class ChatWallpaper extends LitElement {
  static styles = css`
    :host { position: absolute; inset: 0; overflow: hidden; }
    .art { display: block; fill: none; stroke: #172127; stroke-width: 3.6; stroke-linecap: round; stroke-linejoin: round; }
  `;
  render() {
    return html`<svg class="art" width="869" height="442" viewBox="0 0 2607 1326">${doodles}</svg>`;
  }
}

@customElement("chat-bubble")
export class ChatBubble extends LitElement {
  @property({ attribute: false }) message!: Message;

  static styles = css`
    :host { display: flex; }
    .bubble { position: relative; box-sizing: border-box; border-radius: 7.5px; background: #202c33; color: #e9edef; box-shadow: 0 1px 0.5px rgba(11, 20, 26, 0.13); }
    .out { background: #00614d; margin-left: auto; }
    .first { border-top-left-radius: 0; }
    .out.first { border-top-left-radius: 7.5px; border-top-right-radius: 0; }
    .line { display: flex; justify-content: space-between; box-sizing: border-box; height: 33px; padding: 6px 7px 0 8.6px; }
    .tall .line { height: 52px; }
    .text { font-size: 14.2px; line-height: 19px; white-space: nowrap; }
    .meta { display: flex; align-items: center; align-self: flex-end; gap: 3.4px; height: 15px; margin-bottom: 3px; font-size: 11px; line-height: 15px; white-space: nowrap; color: rgba(255, 255, 255, 0.6); }
    .tall .line { position: relative; }
    .tall .meta { position: absolute; right: 7px; bottom: 0; }
    .ticks { display: block; width: 16px; height: 11px; fill: none; stroke: rgba(255, 255, 255, 0.6); stroke-width: 1.35; }
    .read { stroke: #3fbcf0; }
    .tail { position: absolute; top: 0; left: -8px; width: 8px; height: 13px; fill: #202c33; }
    .out .tail { left: auto; right: -8px; fill: #00614d; transform: scaleX(-1); }
    .quote { display: flex; margin: 0 3px; border-radius: 7.5px; background: #005646; overflow: hidden; height: 54px; }
    .quoted { padding-top: 3px; }
    .bar { width: 4px; background: #06dfa0; }
    .body { padding: 5px 8px; font-size: 13.15px; line-height: 20px; color: rgba(255, 255, 255, 0.55); }
    .author { color: #06cf94; line-height: 20px; margin-bottom: 1px; font-size: 12.8px; }
  `;

  render() {
    const m = this.message;
    return html`<div
      class=${classMap({ bubble: true, out: !!m.out, first: !!m.first, tall: !!m.tall, quoted: !!m.quote })}
      style=${styleMap({ width: `${m.width}px` })}
    >
      ${m.first ? html`<svg class="tail" viewBox="0 0 8 13"><path d="M8.100 0H2.200C.9 0 .6 .9 1.300 1.900L8.100 10.800Z"></path></svg>` : nothing}
      ${m.quote
        ? html`<div class="quote"><div class="bar"></div><div class="body"><div class="author">${m.quote.author}</div><div>${m.quote.text}</div></div></div>`
        : nothing}
      <div class="line">
        <span class="text">${m.text}</span>
        <span class="meta"
          >${m.time}${m.out
            ? html`<svg class=${classMap({ ticks: true, read: !!m.read })} viewBox="0 0 16 11">
                <path d="M1.200 5.700L4.500 9.100L11.200 1.200M7.300 8.200L8.400 9.100L15.100 1.200"></path>
              </svg>`
            : nothing}</span
        >
      </div>
    </div>`;
  }
}

@customElement("app-root")
export class AppRoot extends LitElement {
  static styles = css`
    :host { display: flex; flex-direction: column; position: relative; height: 442px; overflow: hidden; background: #0b141a; font-family: "Liberation Sans", Arial, sans-serif; }
    .thread { position: relative; flex: 1; display: flex; flex-direction: column; gap: 2px; padding: 9px 22px 0 43px; }
    .date { box-sizing: border-box; width: 66px; height: 32px; border-radius: 7.5px; background: #182229; color: #8696a0; font-size: 12.5px; line-height: 30px; text-align: center; }
    .dateline { display: flex; justify-content: center; margin: 0 -22px 10px -22px; }
    .group { margin-top: 10px; }
    .footer { position: relative; display: flex; height: 20px; padding: 10px 0 0 58px; box-sizing: border-box; background: #202c33; overflow: hidden; }
    .input { flex: 1; height: 42px; border-radius: 8px 0 0 8px; background: #2a3942; }
  `;

  render() {
    return html`
      <chat-wallpaper></chat-wallpaper>
      <div class="thread">
        <div class="dateline"><div class="date">TODAY</div></div>
        ${MESSAGES.map(
          (m, i) => html`<chat-bubble class=${m.first && i > 0 ? "group" : ""} .message=${m}></chat-bubble>`
        )}
      </div>
      <div class="footer"><div class="input"></div></div>
    `;
  }
}
